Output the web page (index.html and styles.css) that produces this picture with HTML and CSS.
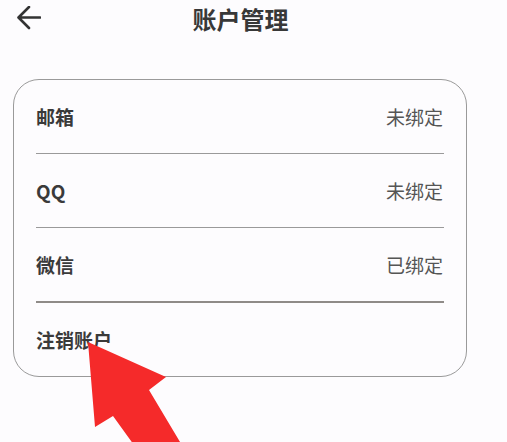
FILE: index.html
```html
<!DOCTYPE html>
<html lang="zh-CN">
<head>
<meta charset="utf-8">
<title>账户管理</title>
<link rel="stylesheet" href="styles.css">
</head>
<body>
<div class="page">
  <header class="topbar">
    <svg class="back" width="24" height="24" viewBox="0 0 24 24" aria-hidden="true">
      <path d="M2 11.5 H23 M12 1 L1.5 11.5 L12 22" fill="none" stroke="#333" stroke-width="2.6" stroke-linecap="round" stroke-linejoin="round"/>
    </svg>
    <h1 class="title">账户管理</h1>
  </header>
  <section class="card">
    <div class="row"><span class="label">邮箱</span><span class="value">未绑定</span></div>
    <div class="row"><span class="label">QQ</span><span class="value">未绑定</span></div>
    <div class="row row-thick"><span class="label">微信</span><span class="value">已绑定</span></div>
    <div class="row row-last"><span class="label">注销账户</span></div>
  </section>
  <svg class="pointer" width="507" height="442" viewBox="0 0 507 442" aria-hidden="true">
    <polygon points="88,342 166,377 149,390 186,452 139,452 113,416 95,427" fill="#f52a2a"/>
  </svg>
</div>
</body>
</html>
```
FILE: styles.css
```css
html, body {
  margin: 0;
  padding: 0;
  background: #fdfcfe;
}
body {
  font-family: "Noto Sans CJK SC", "Noto Sans", sans-serif;
  color: #333;
  width: 507px;
  height: 442px;
  overflow: hidden;
}
.page {
  position: relative;
  width: 507px;
  height: 442px;
}
.topbar {
  display: flex;
  align-items: center;
  height: 37px;
  padding: 0 67px 0 17px;
}
.back {
  display: block;
  flex: none;
  margin-top: -2px;
}
.title {
  flex: 1;
  margin: 0;
  text-align: center;
  font-size: 24px;
  font-weight: 700;
  line-height: 37px;
  color: #383838;
}
.card {
  margin: 42px 40px 0 13px;
  border: 1px solid #9a9a9a;
  border-radius: 26px;
  padding: 0 22px 0 22px;
}
.row {
  display: flex;
  align-items: center;
  justify-content: space-between;
  height: 73px;
  border-bottom: 1px solid #9a9a9a;
}
.row-thick {
  border-bottom: 2px solid #8f8b88;
}
.row-last {
  border-bottom: none;
  height: 73px;
}
.label {
  font-size: 19px;
  font-weight: 700;
  color: #3a3a3a;
}
.value {
  font-size: 19px;
  color: #555;
  margin-right: 1px;
}
.pointer {
  position: absolute;
  left: 0;
  top: 0;
  pointer-events: none;
}
```
